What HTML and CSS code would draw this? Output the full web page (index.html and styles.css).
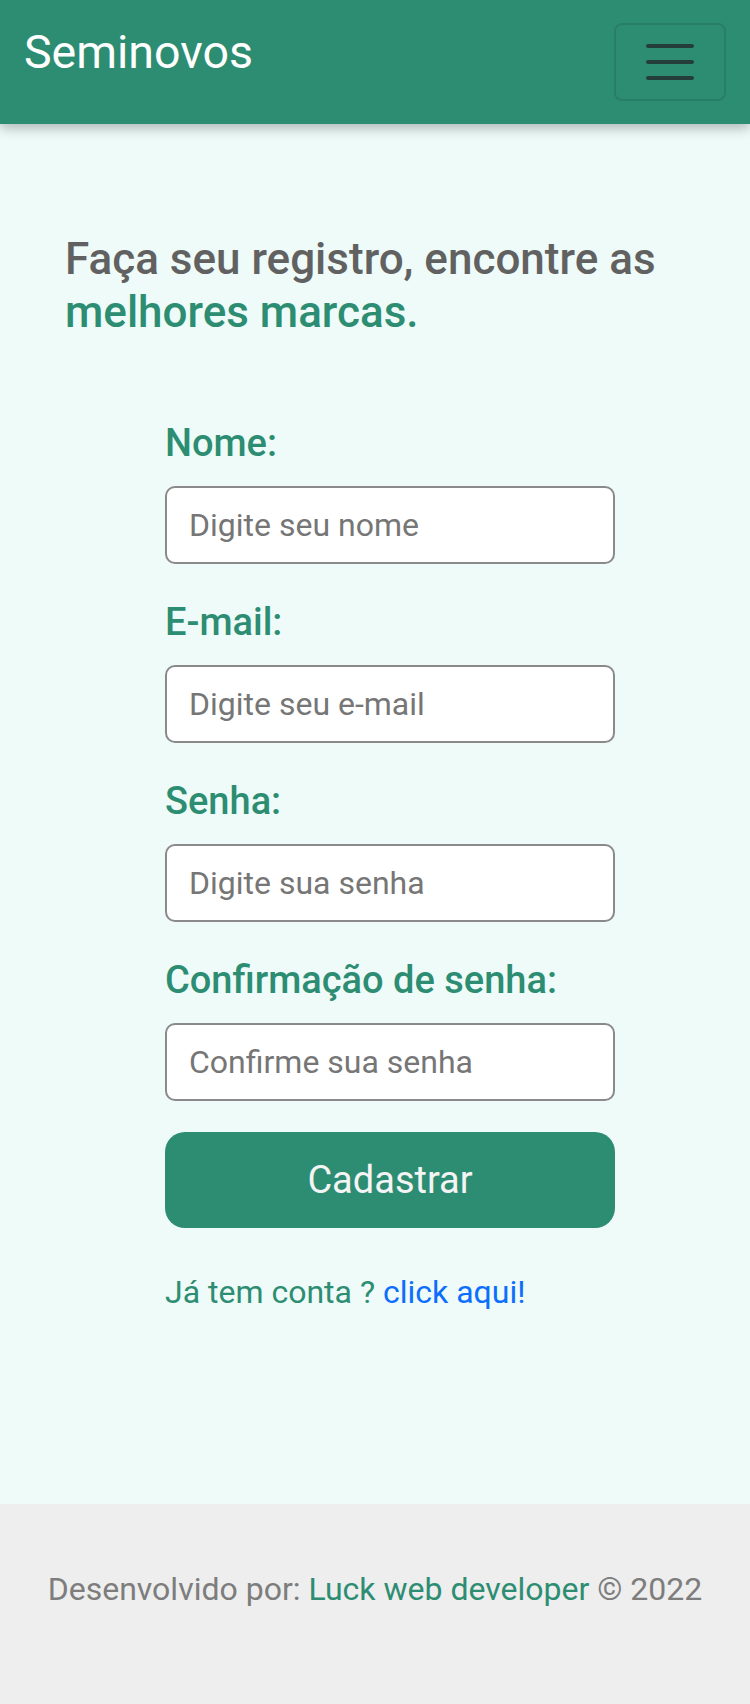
FILE: index.html
```html
<!DOCTYPE html>
<html lang="pt-BR">
<head>
<meta charset="utf-8">
<title>Seminovos - Registro</title>
<link rel="stylesheet" href="styles.css">
</head>
<body>
<header class="navbar">
  <a class="brand" href="#">Seminovos</a>
  <button class="toggler" type="button" aria-label="Menu">
    <svg width="60" height="60" viewBox="0 0 30 30"><path d="M4 7h22M4 15h22M4 23h22" stroke="rgba(33,37,41,0.75)" stroke-width="2" stroke-linecap="round" fill="none"/></svg>
  </button>
</header>
<main class="main">
  <h1 class="headline">Faça seu registro, encontre as <span class="accent">melhores marcas.</span></h1>
  <form class="form">
    <div class="field">
      <label class="label" for="nome">Nome:</label>
      <input class="input" id="nome" type="text" placeholder="Digite seu nome">
    </div>
    <div class="field">
      <label class="label" for="email">E-mail:</label>
      <input class="input" id="email" type="email" placeholder="Digite seu e-mail">
    </div>
    <div class="field">
      <label class="label" for="senha">Senha:</label>
      <input class="input" id="senha" type="password" placeholder="Digite sua senha">
    </div>
    <div class="field">
      <label class="label" for="conf">Confirmação de senha:</label>
      <input class="input" id="conf" type="password" placeholder="Confirme sua senha">
    </div>
    <button class="submit" type="button">Cadastrar</button>
    <p class="login">Já tem conta ? <a href="#">click aqui!</a></p>
  </form>
</main>
<footer class="footer">
  <p>Desenvolvido por: <a href="#">Luck web developer</a> © 2022</p>
</footer>
</body>
</html>
```
FILE: styles.css
```css
* { box-sizing: border-box; }
html, body { margin: 0; padding: 0; }
body {
  font-family: Roboto, "Liberation Sans", sans-serif;
  background: #eefbf8;
  width: 750px;
}
.navbar {
  position: relative;
  z-index: 2;
  height: 124px;
  background: #2d8d72;
  display: flex;
  justify-content: space-between;
  align-items: flex-start;
  padding: 23px 24px 0 24px;
  box-shadow: 0 4px 12px rgba(0,0,0,0.28);
}
.brand {
  color: #fff;
  text-decoration: none;
  font-size: 46.5px;
  line-height: 1;
  font-weight: 400;
  margin-top: 6px;
}
.toggler {
  width: 112px;
  height: 78px;
  padding: 0;
  background: transparent;
  border: 2px solid rgba(0,0,0,0.1);
  border-radius: 8px;
  display: flex;
  align-items: center;
  justify-content: center;
}
.toggler svg { display: block; }
.main {
  height: 1380px;
  padding: 109px 65px 0 65px;
}
.headline {
  margin: 0;
  font-size: 44px;
  line-height: 53px;
  font-weight: 500;
  color: #616161;
}
.accent { color: #2d8d72; }
.form {
  width: 450px;
  margin: 77px 0 0 100px;
}
.field { margin-bottom: 31px; }
.label {
  display: block;
  font-size: 38px;
  line-height: 54px;
  font-weight: 500;
  color: #2d8d72;
  margin-bottom: 16px;
}
.input {
  display: block;
  width: 100%;
  height: 78px;
  border: 2px solid #8a8a8a;
  border-radius: 10px;
  background: #fff;
  padding: 0 22px;
  font-family: Roboto, "Liberation Sans", sans-serif;
  font-size: 32px;
  color: #333;
}
.input::placeholder { color: #767676; }
.submit {
  display: block;
  width: 100%;
  height: 96px;
  margin-top: 1px;
  border: none;
  border-radius: 20px;
  background: #2d8d72;
  color: #f4f4f4;
  font-family: Roboto, "Liberation Sans", sans-serif;
  font-size: 38px;
}
.login {
  margin: 40px 0 0 0;
  font-size: 32px;
  line-height: 48px;
  color: #2d8d72;
}
.login a { color: #0d6efd; text-decoration: none; }
.footer {
  height: 200px;
  background: #eeeeee;
  padding-top: 61px;
  text-align: center;
}
.footer p {
  margin: 0;
  font-size: 32px;
  line-height: 48px;
  color: #7d7d7d;
}
.footer a { color: #2d8d72; text-decoration: none; }
```
